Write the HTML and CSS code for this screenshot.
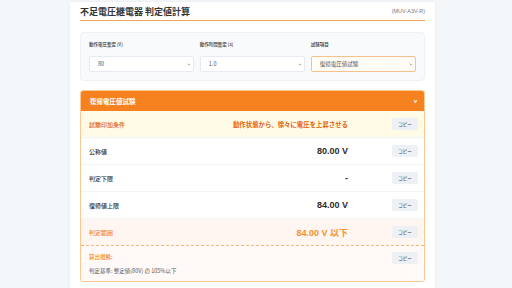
FILE: index.html
```html
<!DOCTYPE html>
<html lang="ja">
<head>
    <meta charset="UTF-8">
    <meta name="viewport" content="width=device-width, initial-scale=1.0">
    <title>不足電圧継電器 判定値計算</title>
    <link rel="stylesheet" href="styles.css">
</head>
<body>
    <div class="panel">
        <div class="title-bar">
            <h1>不足電圧継電器 判定値計算</h1>
            <span class="model">(MUV-A3V-R)</span>
        </div>

        <div class="input-card">
            <div class="field">
                <label>動作電圧整定 [V]</label>
                <div class="select-wrap">
                    <select><option>80</option></select>
                    <svg class="chev" viewBox="0 0 6 4"><path d="M1 1 L3 3 L5 1" /></svg>
                </div>
            </div>
            <div class="field">
                <label>動作時間整定 [s]</label>
                <div class="select-wrap">
                    <select><option>1.0</option></select>
                    <svg class="chev" viewBox="0 0 6 4"><path d="M1 1 L3 3 L5 1" /></svg>
                </div>
            </div>
            <div class="field">
                <label>試験項目</label>
                <div class="select-wrap active">
                    <select><option>復帰電圧値試験</option></select>
                    <svg class="chev" viewBox="0 0 6 4"><path d="M1 1 L3 3 L5 1" /></svg>
                </div>
            </div>
        </div>

        <div class="section">
            <div class="section-head">
                <span>復帰電圧値試験</span>
                <span class="toggle">v</span>
            </div>
            <div class="row cond">
                <span class="label">試験印加条件</span>
                <span class="value note">動作状態から、徐々に電圧を上昇させる</span>
                <button class="copy">コピー</button>
            </div>
            <div class="row">
                <span class="label">公称値</span>
                <span class="value">80.00 V</span>
                <button class="copy">コピー</button>
            </div>
            <div class="row">
                <span class="label">判定下限</span>
                <span class="value">-</span>
                <button class="copy">コピー</button>
            </div>
            <div class="row">
                <span class="label">復帰値上限</span>
                <span class="value">84.00 V</span>
                <button class="copy">コピー</button>
            </div>
            <div class="row range">
                <span class="label">判定範囲</span>
                <span class="value">84.00 V 以下</span>
                <button class="copy">コピー</button>
            </div>
            <div class="row basis">
                <div class="basis-text">
                    <span class="label">算出根拠:</span>
                    <span class="detail">判定基準: 整定値(80V) の 105%以下</span>
                </div>
                <button class="copy">コピー</button>
            </div>
        </div>
    </div>
</body>
</html>
```

FILE: styles.css
```css
body {
    margin: 0;
    background: #f4f7fa;
    font-family: "Noto Sans CJK JP", "Liberation Sans", sans-serif;
    color: #444;
}
.panel {
    width: 345px;
    margin: 2px 0 0 70px;
    padding: 0 10px 10px;
    background: white;
    box-shadow: 0 0 3px rgba(0,0,0,0.06);
}
.title-bar {
    display: flex;
    justify-content: space-between;
    align-items: center;
    height: 18px;
    border-bottom: 1.5px solid #f4a35c;
}
.title-bar h1 {
    margin: 0;
    font-size: 9px;
    font-weight: bold;
    color: #333;
}
.model {
    font-family: "Liberation Sans", sans-serif;
    font-size: 5.5px;
    color: #777;
}
.input-card {
    display: grid;
    grid-template-columns: 1fr 1fr 1fr;
    gap: 5.5px;
    margin-top: 11px;
    padding: 7px 8px 8px;
    background: #f8fafc;
    border: 1px solid #eef1f5;
    border-radius: 4px;
}
.field label {
    display: block;
    font-size: 4.5px;
    font-weight: 500;
    color: #333;
    height: 8px;
    line-height: 8px;
}
.select-wrap {
    position: relative;
    margin-top: 8px;
}
.select-wrap select {
    display: block;
    appearance: none;
    width: 100%;
    height: 16px;
    padding: 0 0 0 8px;
    border: 1px solid #e6ebf1;
    border-radius: 2px;
    background: white;
    font-family: "Noto Sans CJK JP", "Liberation Sans", sans-serif;
    font-size: 5.5px;
    color: #555;
}
.select-wrap.active select {
    border-color: #f8c08a;
    background: #fffbf5;
}
.chev {
    position: absolute;
    right: 3px;
    top: 7px;
    width: 4px;
    height: 3px;
    fill: none;
    stroke: #666;
    stroke-width: 0.8;
}
.section {
    margin-top: 9px;
    border: 1px solid #fcc892;
    border-radius: 3px;
    overflow: hidden;
}
.section-head {
    display: flex;
    justify-content: space-between;
    align-items: center;
    height: 20px;
    padding: 0 9px;
    background: #f5821f;
    color: white;
    font-size: 6.5px;
    font-weight: bold;
}
.toggle {
    font-family: "Liberation Sans", sans-serif;
    font-size: 6px;
    margin-right: -2px;
}
.row {
    display: flex;
    align-items: center;
    height: 26px;
    padding: 0 6px 0 8px;
    border-top: 1px solid #f3f4f6;
    background: white;
}
.row .label {
    font-size: 6px;
    font-weight: 500;
    color: #333;
}
.row .value {
    flex: 1;
    text-align: right;
    font-family: "Liberation Sans", "Noto Sans CJK JP", sans-serif;
    font-size: 9px;
    font-weight: bold;
    color: #2d2d2d;
}
.copy {
    width: 26px;
    height: 12px;
    margin-left: 44px;
    padding: 0;
    border: none;
    border-radius: 2px;
    background: #edf1f5;
    font-family: "Noto Sans CJK JP", sans-serif;
    font-size: 4.5px;
    color: #444;
}
.row.cond {
    background: #fffbe7;
    border-top: none;
}
.row.cond .label {
    color: #e0620a;
}
.row.cond .value.note {
    font-family: "Noto Sans CJK JP", sans-serif;
    font-size: 6.4px;
    color: #e4620b;
}
.row.range {
    background: #fff6f2;
}
.row.range .label {
    color: #f08a2c;
}
.row.range .value {
    color: #f5922e;
}
.row.basis {
    height: 35px;
    align-items: flex-start;
    border-top: 1px dashed #f9b77a;
    background: #fffaf8;
}
.basis-text {
    flex: 1;
    display: flex;
    flex-direction: column;
    gap: 6px;
    padding-top: 7px;
}
.basis-text .label {
    font-size: 5.5px;
    color: #f08a2c;
}
.detail {
    font-size: 5.5px;
    color: #555;
}
.row.basis .copy {
    margin-top: 6px;
}
```
